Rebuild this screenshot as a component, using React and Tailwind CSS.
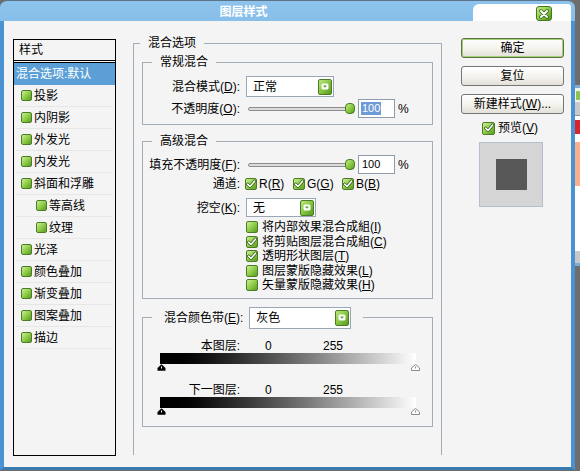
import React from "react";

const FONT = "font-['Liberation_Sans','Noto_Sans_CJK_SC',sans-serif]";

function GreenSq({ checked = false, size = "w-[12px] h-[12px]" }) {
  return (
    <span
      className={`inline-flex shrink-0 items-center justify-center ${size} rounded-[2px] border border-[#4b7d24] bg-linear-to-br from-[#cdee95] via-[#8fcd48] to-[#5c9b25]`}
    >
      {checked && (
        <svg width="10" height="10" viewBox="0 0 10 10">
          <path d="M1.6 5.2 L4 7.5 L8.5 2.2" fill="none" stroke="#2f5a14" strokeWidth="3" strokeLinecap="round" strokeLinejoin="round" />
          <path d="M1.6 5.2 L4 7.5 L8.5 2.2" fill="none" stroke="#ffffff" strokeWidth="1.6" strokeLinecap="round" strokeLinejoin="round" />
        </svg>
      )}
    </span>
  );
}

function DropBtn() {
  return (
    <span className="inline-flex shrink-0 items-center justify-center w-[14px] h-[16px] rounded-[2px] border border-[#4b7d24] bg-linear-to-br from-[#bfe67f] via-[#86c640] to-[#5a9724]">
      <svg width="8" height="7" viewBox="0 0 8 7">
        <rect x="0.5" y="0.5" width="7" height="6" rx="1.5" fill="#ffffff" />
        <path d="M2 2.4 L6 2.4 L4 4.8 Z" fill="#5c9b25" />
      </svg>
    </span>
  );
}

function Select({ children, w, h }) {
  return (
    <div className={`ml-[6px] ${w} ${h} shrink-0 flex items-center justify-between border border-[#9aa7b6] bg-white pl-[6px] pr-[1px]`}>
      <span className="leading-[14px]">{children}</span>
      <DropBtn />
    </div>
  );
}

function Label({ children }) {
  return <span className="w-[97px] shrink-0 text-right leading-[14px]">{children}</span>;
}

function Slider() {
  return (
    <div className="relative ml-[8px] w-[108px] h-[19px] shrink-0">
      <div className="absolute left-0 top-[8px] w-[99px] h-[4px] rounded-[2px] border border-[#8c8c8c] bg-[#dcdcdc]" />
      <div className="absolute left-[97px] top-[4px] w-[10px] h-[11px] rounded-[4px] border border-[#4b7d24] bg-linear-to-br from-[#c4ea84] via-[#8ccc45] to-[#5d9d25]" />
    </div>
  );
}

function NumInput({ selected = false }) {
  return (
    <div className="ml-[2px] w-[37px] h-[19px] shrink-0 flex items-center border border-[#8d9bab] bg-white pl-[2px] text-[11px]">
      <span className={selected ? "bg-[#6c9bd6] text-white px-[1px] leading-[13px]" : "px-[1px] leading-[13px]"}>100</span>
    </div>
  );
}

function Btn({ children, primary = false }) {
  return (
    <div
      className={`w-[103px] h-[20px] flex items-center justify-center rounded-[3px] border bg-linear-to-b from-[#ffffff] via-[#f5f4ef] to-[#e3e1d8] leading-[14px] ${
        primary ? "border-[#5e6f4c] shadow-[inset_0_0_0_1px_#a6cf72]" : "border-[#767676]"
      }`}
    >
      {children}
    </div>
  );
}

function Marker({ dark }) {
  return (
    <svg width="9" height="7" viewBox="0 0 9 7">
      {dark ? (
        <>
          <path d="M4.5 0.3 L8.5 4 L8.5 6.7 L0.5 6.7 L0.5 4 Z" fill="#000000" />
          <path d="M4.5 2.5 L4.5 4.5" stroke="#ffffff" strokeWidth="1" />
        </>
      ) : (
        <>
          <path d="M4.5 0.5 L8.5 4 L8.5 6.5 L0.5 6.5 L0.5 4 Z" fill="#ffffff" stroke="#8a8a8a" strokeWidth="1" />
          <path d="M4.5 2.5 L4.5 4.5" stroke="#8a8a8a" strokeWidth="1" />
        </>
      )}
    </svg>
  );
}

const items = [
  { t: "投影" },
  { t: "内阴影" },
  { t: "外发光" },
  { t: "内发光" },
  { t: "斜面和浮雕" },
  { t: "等高线", sub: true },
  { t: "纹理", sub: true },
  { t: "光泽" },
  { t: "颜色叠加" },
  { t: "渐变叠加" },
  { t: "图案叠加" },
  { t: "描边" },
];

const checks = [
  { t: "将内部效果混合成組", k: "I", c: false },
  { t: "将剪贴图层混合成組", k: "C", c: true },
  { t: "透明形状图层", k: "T", c: true },
  { t: "图层蒙版隐藏效果", k: "L", c: false },
  { t: "矢量蒙版隐藏效果", k: "H", c: false },
];

export default function App() {
  return (
    <div className={`relative w-[580px] h-[471px] overflow-hidden bg-[#6d6d6d] text-[12px] text-black ${FONT}`}>
      {/* window behind the dialog */}
      <div className="absolute left-[574px] top-[85px] w-[10px] h-[181px] flex flex-col border-t-[3px] border-b-[3px] border-[#7eaad4] bg-[#dfe6ee]">
        <div className="h-[14px] bg-[#eef2ea] flex items-center pl-[2px]">
          <div className="w-[4px] h-[9px] rounded-[1px] bg-[#8cc24c]" />
        </div>
        <div className="h-[14px] bg-[#c9c9c9] border-b border-[#8f8f8f]" />
        <div className="flex-1 bg-white flex flex-col">
          <div className="h-[14px] mt-[4px] bg-[#d7262c]" />
          <div className="h-[8px]" />
          <div className="h-[44px] bg-[#f7b089]" />
        </div>
        <div className="h-[12px] bg-[#c8c8c8]" />
      </div>

      {/* dialog window */}
      <div className="relative w-[575px] h-[470px] flex flex-col rounded-t-[7px] overflow-hidden border-t border-[#5d7488] bg-linear-to-b from-[#8dc3ec] via-[#4a96d5] to-[#3984c8]">
        {/* title bar */}
        <div className="h-[20px] shrink-0 flex">
          <div className="flex-1 flex justify-center items-center pl-[14px] pt-[2px] text-white font-bold text-[12px] leading-[14px]">
            图层样式
          </div>
          <div className="self-end w-[98px] h-[17px] bg-white rounded-tl-[6px] rounded-tr-[3px] flex justify-end items-start pt-[2px] pr-[19px]">
            <div className="w-[16px] h-[15px] rounded-[3px] border border-[#3f7a1f] bg-linear-to-br from-[#c6ea8a] via-[#8ccb47] to-[#4f8f20] flex items-center justify-center">
              <svg width="10" height="10" viewBox="0 0 10 10">
                <path d="M2 2 L8 8 M8 2 L2 8" stroke="#2f5a14" strokeWidth="3.4" strokeLinecap="round" />
                <path d="M2 2 L8 8 M8 2 L2 8" stroke="#ffffff" strokeWidth="2" strokeLinecap="round" />
              </svg>
            </div>
          </div>
          <div className="w-[4px]" />
        </div>

        {/* body */}
        <div className="flex-1 min-h-0 flex items-start bg-[#f4f4f4] border-l-[4px] border-r-[4px] border-b-[3px] border-l-[#4a92d2] border-r-[#4a92d2] border-b-[#3a7bb2]">
          {/* styles list */}
          <div className="ml-[9px] mt-[18px] w-[103px] h-[417px] shrink-0 border border-black flex flex-col">
            <div className="h-[23px] shrink-0 flex items-center pl-[5px] border-b-[3px] border-double border-black leading-[14px]">
              样式
            </div>
            <div className="h-[22px] shrink-0 flex items-center pl-[2px] bg-[#5b9fd6] text-white leading-[14px]">
              混合选项:默认
            </div>
            {items.map((it) => (
              <div
                key={it.t}
                className={`mx-[2px] h-[22px] shrink-0 flex items-center gap-[2px] border-b border-[#e6e6e6] leading-[14px] ${
                  it.sub ? "pl-[20px]" : "pl-[5px]"
                }`}
              >
                <GreenSq size="w-[11px] h-[11px]" />
                <span>{it.t}</span>
              </div>
            ))}
          </div>

          {/* blending options */}
          <fieldset className="ml-[17px] mt-[15px] w-[309px] h-[419px] shrink-0 border border-b-0 border-[#a3adb9] px-[8px]">
            <legend className="-ml-[2px] px-[8px] leading-[14px]">混合选项</legend>

            <fieldset className="mt-[5px] border border-[#a3adb9] pb-[6px]">
              <legend className="ml-[9px] px-[8px] leading-[14px]">常规混合</legend>
              <div className="mt-[7px] flex items-center h-[21px]">
                <Label>
                  混合模式(<u>D</u>):
                </Label>
                <Select w="w-[88px]" h="h-[21px]">正常</Select>
              </div>
              <div className="mt-[2px] flex items-center h-[19px]">
                <Label>
                  不透明度(<u>O</u>):
                </Label>
                <Slider />
                <NumInput selected />
                <span className="ml-[3px] leading-[14px]">%</span>
              </div>
            </fieldset>

            <fieldset className="mt-[9px] border border-[#a3adb9] pb-[5px]">
              <legend className="ml-[9px] px-[8px] leading-[14px]">高级混合</legend>
              <div className="mt-[7px] flex items-center h-[19px]">
                <Label>
                  填充不透明度(<u>F</u>):
                </Label>
                <Slider />
                <NumInput />
                <span className="ml-[3px] leading-[14px]">%</span>
              </div>
              <div className="mt-[2px] flex items-center h-[16px]">
                <Label>通道:</Label>
                <div className="ml-[5px] flex items-center">
                  <span className="w-[48px] flex items-center gap-[2px]">
                    <GreenSq checked />
                    <span className="leading-[14px]">
                      R(<u>R</u>)
                    </span>
                  </span>
                  <span className="w-[49px] flex items-center gap-[2px]">
                    <GreenSq checked />
                    <span className="leading-[14px]">
                      G(<u>G</u>)
                    </span>
                  </span>
                  <span className="flex items-center gap-[2px]">
                    <GreenSq checked />
                    <span className="leading-[14px]">
                      B(<u>B</u>)
                    </span>
                  </span>
                </div>
              </div>
              <div className="mt-[6px] flex items-center h-[19px]">
                <Label>
                  挖空(<u>K</u>):
                </Label>
                <Select w="w-[70px]" h="h-[19px]">无</Select>
              </div>
              <div className="mt-[3px] flex flex-col pl-[103px]">
                {checks.map((c) => (
                  <div key={c.k} className="h-[14.5px] flex items-center gap-[4px]">
                    <GreenSq checked={c.c} />
                    <span className="leading-[14px]">
                      {c.t}(<u>{c.k}</u>)
                    </span>
                  </div>
                ))}
              </div>
            </fieldset>

            <fieldset className="mt-[8px] border border-[#a3adb9] pb-[11px]">
              <legend className="ml-[9px] px-[12px] flex items-center">
                <span className="leading-[14px]">
                  混合颜色带(<u>E</u>):
                </span>
                <Select w="w-[102px]" h="h-[22px]">灰色</Select>
              </legend>

              <div className="mt-[10px] flex items-center h-[14px]">
                <Label>本图层:</Label>
                <span className="ml-[25px] w-[58px] leading-[14px]">0</span>
                <span className="leading-[14px]">255</span>
              </div>
              <div className="ml-[17px] w-[256px] h-[11px] bg-linear-to-r from-black to-white" />
              <div className="ml-[14px] w-[263px] h-[7px] flex justify-between">
                <Marker dark />
                <Marker />
              </div>

              <div className="mt-[12px] flex items-center h-[14px]">
                <Label>下一图层:</Label>
                <span className="ml-[25px] w-[58px] leading-[14px]">0</span>
                <span className="leading-[14px]">255</span>
              </div>
              <div className="ml-[17px] w-[256px] h-[11px] bg-linear-to-r from-black to-white" />
              <div className="ml-[14px] w-[263px] h-[7px] flex justify-between">
                <Marker dark />
                <Marker />
              </div>
            </fieldset>
          </fieldset>

          {/* right column */}
          <div className="ml-[19px] mt-[17px] w-[103px] shrink-0 flex flex-col">
            <Btn primary>确定</Btn>
            <div className="mt-[8px]">
              <Btn>复位</Btn>
            </div>
            <div className="mt-[8px]">
              <Btn>
                新建样式(<u>W</u>)...
              </Btn>
            </div>
            <div className="mt-[7px] ml-[21px] h-[14px] flex items-center gap-[3px]">
              <GreenSq checked size="w-[13px] h-[13px]" />
              <span className="leading-[14px]">
                预览(<u>V</u>)
              </span>
            </div>
            <div className="mt-[7px] ml-[18px] w-[64px] h-[65px] border border-[#b3bfcc] bg-[#d5d5d5] flex items-center justify-center">
              <div className="w-[31px] h-[31px] bg-[#575757]" />
            </div>
          </div>
        </div>
      </div>
    </div>
  );
}
